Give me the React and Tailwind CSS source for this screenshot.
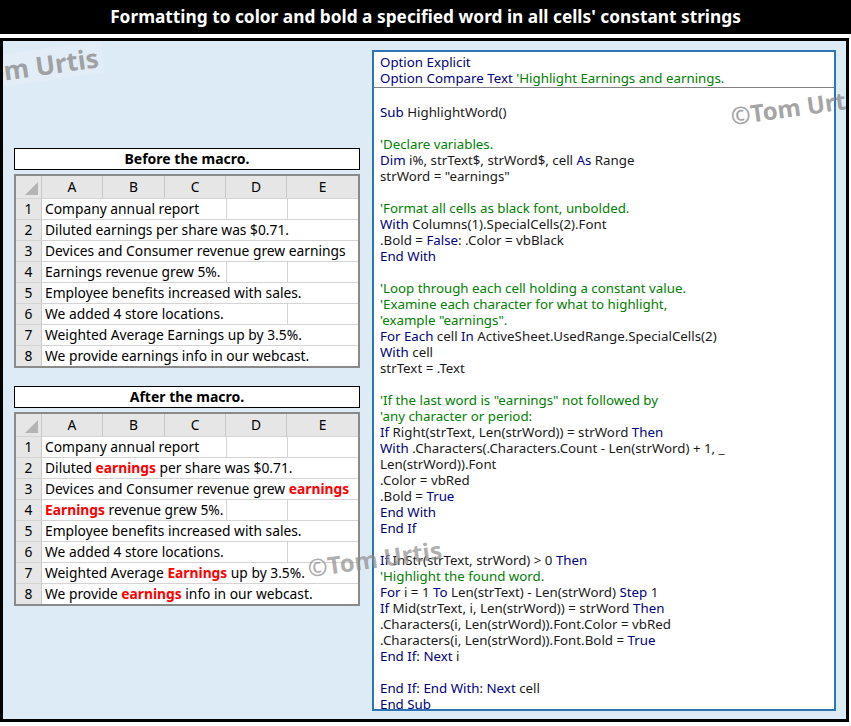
const KW = new Set(["Option","Explicit","Compare","Text","Sub","Dim","As","With","End","False","True","For","Each","In","If","Then","To","Step","Next"]);

const CODE = [
  "Option Explicit",
  "Option Compare Text 'Highlight Earnings and earnings.",
  "",
  "Sub HighlightWord()",
  "",
  "'Declare variables.",
  "Dim i%, strText$, strWord$, cell As Range",
  'strWord = "earnings"',
  "",
  "'Format all cells as black font, unbolded.",
  "With Columns(1).SpecialCells(2).Font",
  ".Bold = False: .Color = vbBlack",
  "End With",
  "",
  "'Loop through each cell holding a constant value.",
  "'Examine each character for what to highlight,",
  "'example \"earnings\".",
  "For Each cell In ActiveSheet.UsedRange.SpecialCells(2)",
  "With cell",
  "strText = .Text",
  "",
  "'If the last word is \"earnings\" not followed by",
  "'any character or period:",
  "If Right(strText, Len(strWord)) = strWord Then",
  "With .Characters(.Characters.Count - Len(strWord) + 1, _",
  "Len(strWord)).Font",
  ".Color = vbRed",
  ".Bold = True",
  "End With",
  "End If",
  "",
  "If InStr(strText, strWord) > 0 Then",
  "'Highlight the found word.",
  "For i = 1 To Len(strText) - Len(strWord) Step 1",
  "If Mid(strText, i, Len(strWord)) = strWord Then",
  ".Characters(i, Len(strWord)).Font.Color = vbRed",
  ".Characters(i, Len(strWord)).Font.Bold = True",
  "End If: Next i",
  "",
  "End If: End With: Next cell",
  "End Sub",
];

function CodeLine({ text }) {
  const ci = text.indexOf("'");
  const code = ci >= 0 ? text.slice(0, ci) : text;
  const comment = ci >= 0 ? text.slice(ci) : "";
  const parts = code.split(/(\s+|[^A-Za-z]+)/).filter((p) => p !== "");
  let prev = "";
  return (
    <div className="h-4 whitespace-pre">
      {parts.map((p, i) => {
        const kw = KW.has(p) && !prev.endsWith(".");
        prev = p;
        return (
          <span key={i} className={kw ? "text-[#00007f]" : "text-[#1a1a1a]"}>
            {p}
          </span>
        );
      })}
      {comment && <span className="text-[#008000]">{comment}</span>}
    </div>
  );
}

const ROWS_BEFORE = [
  [["Company annual report"], 3],
  [["Diluted earnings per share was $0.71."], 5],
  [["Devices and Consumer revenue grew earnings"], 5],
  [["Earnings revenue grew 5%."], 3],
  [["Employee benefits increased with sales."], 5],
  [["We added 4 store locations."], 4],
  [["Weighted Average Earnings up by 3.5%."], 5],
  [["We provide earnings info in our webcast."], 5],
];

const ROWS_AFTER = [
  [["Company annual report"], 3],
  [["Diluted ", "*earnings", " per share was $0.71."], 5],
  [["Devices and Consumer revenue grew ", "*earnings"], 5],
  [["*Earnings", " revenue grew 5%."], 3],
  [["Employee benefits increased with sales."], 5],
  [["We added 4 store locations."], 4],
  [["Weighted Average ", "*Earnings", " up by 3.5%."], 5],
  [["We provide ", "*earnings", " info in our webcast."], 5],
];

const COLS = "grid-cols-[26px_61px_62px_61px_61px_1fr]";
const SPAN = { 3: "col-span-3", 4: "col-span-4", 5: "col-span-5" };

function Sheet({ title, rows }) {
  return (
    <div className="flex flex-col gap-1">
      <div className="h-[22px] border border-black bg-white text-center text-[14px] font-bold leading-[20px]">
        {title}
      </div>
      <div className="border-2 border-[#8a8a8a] bg-white text-[13.8px] text-black">
        <div className={`grid ${COLS} h-[22px] bg-[#e6e6e6] text-center leading-[22px]`}>
          <div className="relative border-r border-[#c8c8c8]">
            <svg className="absolute bottom-[3px] right-[3px]" width="13" height="13"><polygon points="13,0 13,13 0,13" fill="#b4b4b4" /></svg>
          </div>
          {["A", "B", "C", "D", "E"].map((c) => (
            <div key={c} className="border-r border-[#c8c8c8] last:border-r-0">{c}</div>
          ))}
        </div>
        {rows.map(([segs, span], r) => (
          <div key={r} className={`grid ${COLS} h-[21px] border-t border-[#d4d4d4] leading-[20px]`}>
            <div className="border-r border-[#c8c8c8] bg-[#e6e6e6] text-center">{r + 1}</div>
            <div className={`${SPAN[span]} whitespace-nowrap pl-[3px]`}>
              {segs.map((s, i) =>
                s.startsWith("*") ? (
                  <span key={i} className="font-bold text-[#ff0000]">{s.slice(1)}</span>
                ) : (
                  <span key={i}>{s}</span>
                )
              )}
            </div>
            {Array.from({ length: 5 - span }).map((_, i) => (
              <div key={i} className="border-l border-[#d4d4d4]" />
            ))}
          </div>
        ))}
      </div>
    </div>
  );
}

export default function App() {
  return (
    <div className="h-[726px] w-[851px] bg-white font-['Open_Sans',sans-serif]">
      <div className="flex h-[34px] items-center justify-center bg-black text-[17.3px] font-bold text-white">
        Formatting to color and bold a specified word in all cells' constant strings
      </div>
      <div className="relative mt-[4px] flex h-[684px] w-[849px] gap-[12px] overflow-hidden border-[3px] border-black bg-[#ddebf7] pl-[11px] pt-[9px]">
        <div className="flex w-[346px] flex-col gap-[18px] pt-[98px] font-['Noto_Sans',sans-serif]">
          <Sheet title="Before the macro." rows={ROWS_BEFORE} />
          <Sheet title="After the macro." rows={ROWS_AFTER} />
        </div>
        <div className="h-[661px] w-[464px] border-2 border-[#2e75b6] bg-white font-['Liberation_Mono'] text-[13.3px] leading-4">
          <div className="border-b border-[#808080] px-[6px] pb-[1px] pt-[2px]">
            <CodeLine text={CODE[0]} />
            <CodeLine text={CODE[1]} />
          </div>
          <div className="px-[6px]">
            {CODE.slice(2).map((l, i) => (
              <CodeLine key={i} text={l} />
            ))}
          </div>
        </div>
        <div className="absolute left-[-20px] top-[8px] -rotate-[8deg] whitespace-nowrap bg-[#e6eef6]/70 px-1 text-[26px] font-bold leading-8 text-[#8c8c8c]/80">
          om Urtis
        </div>
        <div className="absolute left-[727px] top-[48px] -rotate-[8deg] whitespace-nowrap text-[24px] font-bold text-[#8c8c8c]/80">
          ©Tom Urtis
        </div>
        <div className="absolute left-[304px] top-[500px] -rotate-[8deg] whitespace-nowrap text-[24px] font-bold text-[#8c8c8c]/70">
          ©Tom Urtis
        </div>
      </div>
    </div>
  );
}
